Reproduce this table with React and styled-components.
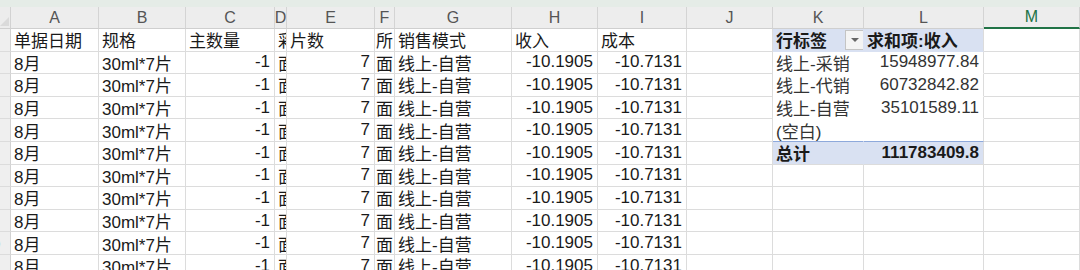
import React from "react";
import styled, { createGlobalStyle, css } from "styled-components";

const GlobalStyle = createGlobalStyle`
  html, body { margin: 0; padding: 0; background: #ffffff; overflow: hidden; }
  body { font-family: "Liberation Sans", "Noto Sans CJK SC", sans-serif; }
`;

const COLS = "11px 88px 87px 89px 12px 88px 20px 117px 86px 89px 86px 91px 120px 1fr";
const GRID = "#dcdcdc";
const PIVOT_BG = "#d9e1f2";
const PIVOT_LINE = "#8ea9db";

const Page = styled.div`
  width: 1080px;
  height: 270px;
  overflow: hidden;
  display: flex;
  flex-direction: column;
`;

const TopBand = styled.div`
  height: 7px;
  flex: none;
  background: #e5ece7;
`;

const Sheet = styled.div`
  display: grid;
  grid-template-columns: ${COLS};
  grid-auto-rows: 22.6px;
  grid-template-rows: 22px;
`;

const Corner = styled.div`
  box-sizing: border-box;
  background: #ececec;
  border-right: 1px solid #d2d2d2;
  border-bottom: 1px solid #cfcfcf;
  position: relative;
  overflow: hidden;
  &::after {
    content: "";
    position: absolute;
    right: 1px;
    bottom: 2px;
    width: 0;
    height: 0;
    border-left: 9px solid transparent;
    border-bottom: 9px solid #dadada;
  }
`;

const ColHead = styled.div`
  box-sizing: border-box;
  background: #ededed;
  border-right: 1px solid #d4d4d4;
  border-bottom: 1px solid #cfcfcf;
  color: #555;
  font-size: 16px;
  display: flex;
  align-items: center;
  justify-content: center;
  overflow: hidden;
  white-space: nowrap;
  ${(p) =>
    p.$active &&
    css`
      color: #217346;
      border-bottom: 2px solid #217346;
    `}
`;

const RowHead = styled.div`
  box-sizing: border-box;
  background: #efefef;
  border-right: 1px solid #d2d2d2;
  border-bottom: 1px solid ${GRID};
  overflow: hidden;
  display: flex;
  align-items: center;
  justify-content: flex-end;
  font-size: 15px;
  color: ${(p) => (p.$active ? "#1f9a8a" : "#555")};
`;

const RowNum = styled.span`
  flex: none;
  width: 36px;
  text-align: center;
`;

const Cell = styled.div`
  box-sizing: border-box;
  border-right: 1px solid ${GRID};
  border-bottom: 1px solid ${GRID};
  font-size: 17px;
  color: #1a1a1a;
  padding: 0 3px;
  display: flex;
  align-items: center;
  justify-content: ${(p) => (p.$align === "right" ? "flex-end" : "flex-start")};
  padding-right: ${(p) => (p.$align === "right" ? "4px" : "3px")};
  padding-left: ${(p) => (p.$narrow ? "1px" : "3px")};
  white-space: nowrap;
  overflow: hidden;
  font-weight: ${(p) => (p.$bold ? 700 : 400)};
  ${(p) =>
    p.$pivot === "head" &&
    css`
      background: ${PIVOT_BG};
      border-bottom-color: ${PIVOT_BG};
      color: #1a1a1a;
    `}
  ${(p) =>
    p.$pivot === "body" &&
    css`
      border-bottom-color: #ffffff;
      color: #333;
    `}
  ${(p) =>
    p.$pivot === "last" &&
    css`
      border-bottom-color: ${PIVOT_LINE};
      color: #333;
    `}
  ${(p) =>
    p.$pivot === "total" &&
    css`
      background: ${PIVOT_BG};
      color: #1a1a1a;
    `}
  ${(p) =>
    p.$inner &&
    css`
      border-right-color: ${p.$pivot === "head" || p.$pivot === "total" ? PIVOT_BG : "#ffffff"};
    `}
`;

const CellText = styled.span`
  flex: none;
`;

const FilterButton = styled.span`
  flex: none;
  margin-left: auto;
  margin-right: -4px;
  width: 19px;
  height: 20px;
  box-sizing: border-box;
  border: 1px solid #c4c4c4;
  background: #f4f4f4;
  display: flex;
  align-items: center;
  justify-content: center;
  &::before {
    content: "";
    width: 0;
    height: 0;
    border-left: 4px solid transparent;
    border-right: 4px solid transparent;
    border-top: 4px solid #666;
  }
`;

const letters = ["A", "B", "C", "D", "E", "F", "G", "H", "I", "J", "K", "L", "M"];

const header = ["单据日期", "规格", "主数量", "彩盒", "片数", "所", "销售模式", "收入", "成本", ""];
const dataRow = ["8月", "30ml*7片", "-1", "面膜", "7", "面", "线上-自营", "-10.1905", "-10.7131", ""];
const rightCols = [2, 4, 7, 8];
const narrowCols = [5];

const pivot = [
  { k: "行标签", l: "求和项:收入", type: "head", bold: true, filter: true },
  { k: "线上-采销", l: "15948977.84", type: "body" },
  { k: "线上-代销", l: "60732842.82", type: "body" },
  { k: "线上-自营", l: "35101589.11", type: "body" },
  { k: "(空白)", l: "", type: "last" },
  { k: "总计", l: "111783409.8", type: "total", bold: true },
];

function DataRow({ index }) {
  const values = index === 1 ? header : dataRow;
  const pv = pivot[index - 1];
  return (
    <>
      <RowHead $active={index === 11}>
        <RowNum>{index}</RowNum>
      </RowHead>
      {values.map((v, i) => (
        <Cell
          key={i}
          $narrow={narrowCols.includes(i)}
          $align={index > 1 && rightCols.includes(i) ? "right" : "left"}
        >
          <CellText>{v}</CellText>
        </Cell>
      ))}
      {pv ? (
        <>
          <Cell $pivot={pv.type} $bold={pv.bold} $inner>
            <CellText>{pv.k}</CellText>
            {pv.filter && <FilterButton />}
          </Cell>
          <Cell $pivot={pv.type} $bold={pv.bold} $align={pv.type === "head" ? "left" : "right"}>
            <CellText>{pv.l}</CellText>
          </Cell>
        </>
      ) : (
        <>
          <Cell />
          <Cell />
        </>
      )}
      <Cell />
    </>
  );
}

export default function App() {
  const rows = Array.from({ length: 11 }, (_, i) => i + 1);
  return (
    <Page>
      <GlobalStyle />
      <TopBand />
      <Sheet>
        <Corner />
        {letters.map((l) => (
          <ColHead key={l} $active={l === "M"}>
            {l}
          </ColHead>
        ))}
        {rows.map((r) => (
          <DataRow key={r} index={r} />
        ))}
      </Sheet>
    </Page>
  );
}
